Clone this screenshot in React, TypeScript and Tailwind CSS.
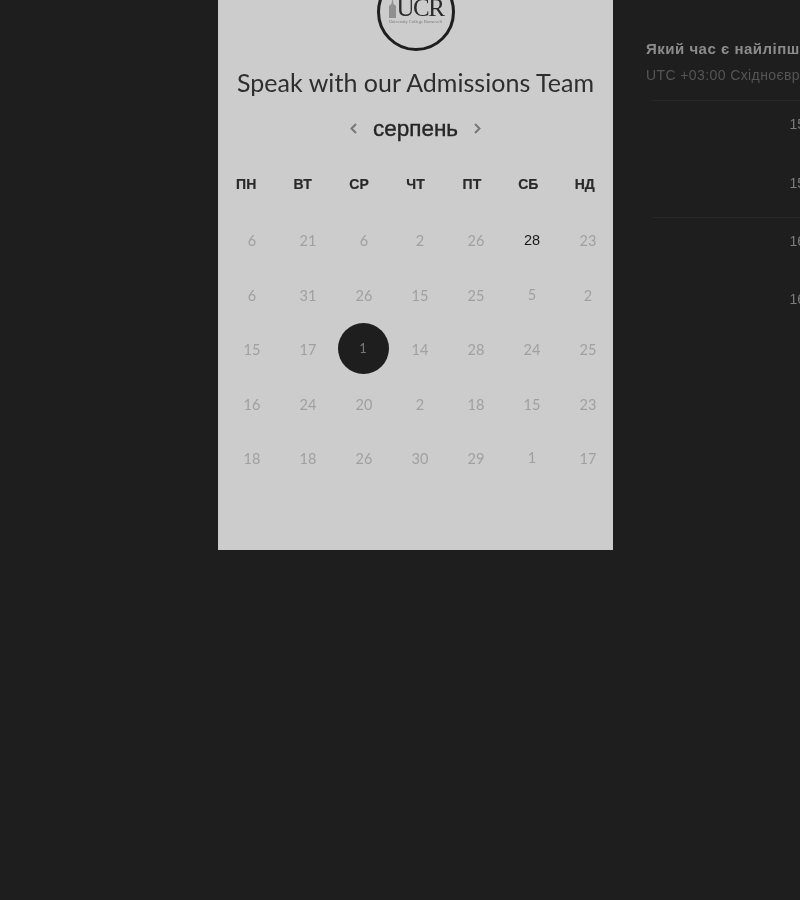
const weekdays = ["ПН", "ВТ", "СР", "ЧТ", "ПТ", "СБ", "НД"];

type Day = { n: number; active?: boolean; selected?: boolean; up?: boolean };

const rows: Day[][] = [
  [{ n: 6 }, { n: 21 }, { n: 6 }, { n: 2 }, { n: 26 }, { n: 28, active: true }, { n: 23 }],
  [{ n: 6 }, { n: 31 }, { n: 26 }, { n: 15 }, { n: 25 }, { n: 5, up: true }, { n: 2 }],
  [{ n: 15 }, { n: 17 }, { n: 1, selected: true }, { n: 14 }, { n: 28 }, { n: 24 }, { n: 25 }],
  [{ n: 16 }, { n: 24 }, { n: 20 }, { n: 2 }, { n: 18 }, { n: 15 }, { n: 23 }],
  [{ n: 18 }, { n: 18 }, { n: 26 }, { n: 30 }, { n: 29 }, { n: 1, up: true }, { n: 17 }],
];

const times = [
  { label: "15:00", pad: "pb-[41px]", divider: false },
  { label: "15:30", pad: "pb-[14px]", divider: true },
  { label: "16:00", pad: "pb-[40px]", divider: false },
  { label: "16:30", pad: "pb-[40px]", divider: false },
];

function Logo() {
  return (
    <div className="mx-auto -mt-[27px] flex h-[78px] w-[78px] flex-col items-center justify-center rounded-full border-[3px] border-[#1e1e1e]">
      <div className="-mt-[4px] flex items-end">
        <svg width="9" height="20" viewBox="0 0 9 20" className="mb-[1px]">
          <path d="M4.5 0 L5.5 6 L8 8 L8 20 L1 20 L1 8 L3.5 6 Z" fill="#8f8f8f" />
        </svg>
        <span className="font-['Liberation_Serif',serif] text-[25px] leading-[22px] tracking-[-1.5px] text-[#2a2a2a]">
          UCR
        </span>
      </div>
      <span className="font-['Liberation_Serif',serif] text-[4.5px] leading-[5px] whitespace-nowrap text-[#777]">
        University College Roosevelt
      </span>
    </div>
  );
}

export default function App() {
  return (
    <div className="flex h-[900px] w-[800px] overflow-hidden bg-[#1e1e1e] pl-[218px] blur-[0.3px]">
      <div className="h-[550px] w-[395px] shrink-0 bg-[#cccccc]">
        <Logo />
        <h1 className="mt-[14px] text-center font-['Lato',sans-serif] text-[25px] leading-[34px] tracking-[0.03px] whitespace-nowrap text-[#2e2e2e]">
          Speak with our Admissions Team
        </h1>

        <div className="mt-[14px] flex h-[32px] items-center justify-center gap-[15px]">
          <svg width="9" height="12" viewBox="0 0 9 12" fill="none" stroke="#777" strokeWidth="2">
            <path d="M7 1 L2.5 5.5 L7 10" />
          </svg>
          <span className="font-['Liberation_Sans',sans-serif] text-[22.5px] leading-[32px] text-[#262626] [-webkit-text-stroke:0.4px_#262626]">
            серпень
          </span>
          <svg width="9" height="12" viewBox="0 0 9 12" fill="none" stroke="#777" strokeWidth="2">
            <path d="M2 1 L6.5 5.5 L2 10" />
          </svg>
        </div>

        <div className="mt-[29px] grid w-[395px] grid-cols-7">
          {weekdays.map((d) => (
            <div
              key={d}
              className="h-[20px] text-center font-['Liberation_Sans',sans-serif] text-[14px] leading-[20px] font-bold text-[#2a2a2a] [-webkit-text-stroke:0.2px_#2a2a2a]"
            >
              {d}
            </div>
          ))}
        </div>

        <div className="mt-[20px] ml-[6px] grid w-[392px] grid-cols-7 auto-rows-[54.5px]">
          {rows.flat().map((day, i) => (
            <div key={i} className="flex items-center justify-center">
              {day.selected ? (
                <span className="flex h-[51px] w-[51px] -translate-x-px -translate-y-[2px] items-center justify-center rounded-full bg-[#1e1e1e] font-['Lato',sans-serif] text-[13px] text-[#777777]">
                  {day.n}
                </span>
              ) : day.active ? (
                <span className="font-['Liberation_Sans',sans-serif] text-[14.5px] text-[#1a1a1a]">{day.n}</span>
              ) : (
                <span className={`font-['Lato',sans-serif] text-[14.5px] text-[#a0a0a0] ${day.up ? "-translate-y-px" : ""}`}>
                  {day.n}
                </span>
              )}
            </div>
          ))}
        </div>
      </div>

      <div className="ml-[33px] w-[322px] shrink-0 pt-[40px] whitespace-nowrap">
        <p className="font-['Liberation_Sans',sans-serif] text-[15px] leading-[18px] font-bold tracking-[0.5px] text-[#8c8c8c]">
          Який час є найліпшим?
        </p>
        <p className="mt-[8px] font-['Liberation_Sans',sans-serif] text-[14px] leading-[18px] tracking-[0.4px] text-[#555555]">
          UTC +03:00 Східноєвропейський літній час
        </p>
        <div className="mt-[16px] ml-[6px] w-[310px] border-t border-[#282828] pt-[14px]">
          {times.map((t) => (
            <div key={t.label} className={t.pad}>
              <div className="text-center font-['Liberation_Sans',sans-serif] text-[14px] leading-[18px] text-[#7d7d7d]">
                {t.label}
              </div>
              {t.divider && <div className="mt-[25px] border-t border-[#282828]" />}
            </div>
          ))}
        </div>
      </div>
    </div>
  );
}
